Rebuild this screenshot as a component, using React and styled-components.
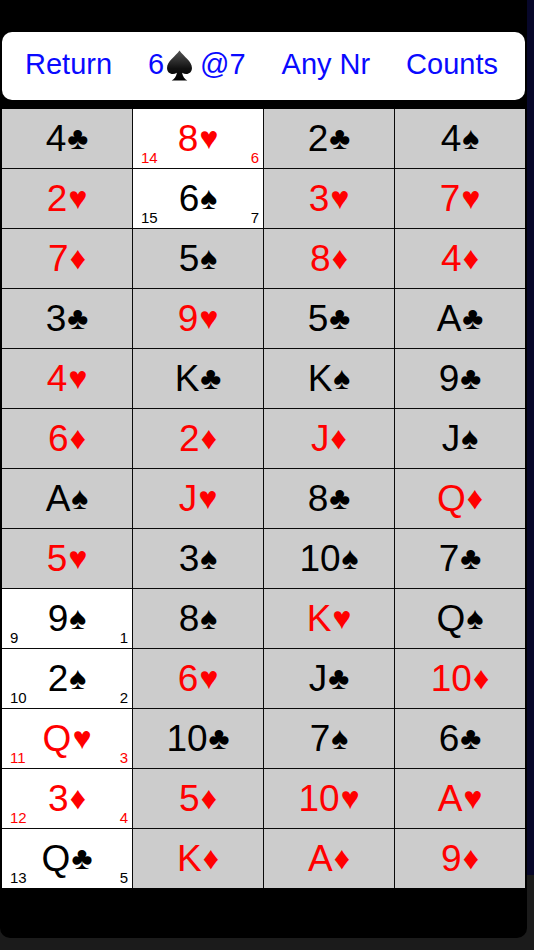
import React from "react";
import styled, { createGlobalStyle } from "styled-components";

const GlobalStyle = createGlobalStyle`
  html, body {
    margin: 0;
    padding: 0;
  }
  body {
    width: 534px;
    height: 950px;
    overflow: hidden;
    background: linear-gradient(to bottom, #07072a 0, #07072a 875px, #1b1b1b 875px);
    font-family: "Liberation Sans", Arial, sans-serif;
  }
`;

const Screen = styled.div`
  width: 527px;
  height: 938px;
  background: #000;
  border-radius: 0 0 10px 10px;
  padding-top: 32px;
  box-sizing: border-box;
`;

const TopBar = styled.div`
  margin: 0 2px;
  width: 523px;
  height: 68px;
  background: #fff;
  border-radius: 10px;
  display: flex;
  align-items: center;
  justify-content: space-between;
  padding: 0 27px 4px 23px;
  box-sizing: border-box;
`;

const BarButton = styled.span`
  color: #0a0aff;
  font-size: 29px;
  display: flex;
  align-items: center;
  white-space: nowrap;
`;

const Grid = styled.div`
  margin: 8px 0 0 1px;
  width: 525px;
  border: 1px solid #000;
  box-sizing: border-box;
  display: grid;
  grid-template-columns: repeat(4, 1fr);
  grid-auto-rows: 59px;
  gap: 1px;
  background: #0a0a0a;
`;

const Cell = styled.div`
  position: relative;
  background: ${({ $picked }) => ($picked ? "#fff" : "#cccccc")};
  color: ${({ $red }) => ($red ? "#ff0000" : "#000")};
  display: flex;
  align-items: center;
  justify-content: center;
  font-size: 37px;
  line-height: 1;
  padding-bottom: 1px;
`;

const Suit = styled.span`
  font-size: 32px;
  margin-left: 1px;
`;

const Corner = styled.span`
  position: absolute;
  bottom: 3px;
  font-size: 15px;
  line-height: 1;
  ${({ $side }) => ($side === "left" ? "left: 8px;" : "right: 4px;")}
`;

const SpadeIcon = () => (
  <svg width="27" height="34" viewBox="0 0 26 32" style={{ margin: "4px 7px 0 2px" }}>
    <defs>
      <linearGradient id="sp" x1="0" y1="0" x2="0" y2="1">
        <stop offset="0" stopColor="#555" />
        <stop offset="0.6" stopColor="#111" />
        <stop offset="1" stopColor="#000" />
      </linearGradient>
    </defs>
    <path
      d="M13 1 C9 7 1 11 1 18 C1 23 6 25.5 10.5 22.5 C10 26 8 28.5 5.5 30 L20.5 30 C18 28.5 16 26 15.5 22.5 C20 25.5 25 23 25 18 C25 11 17 7 13 1 Z"
      fill="url(#sp)"
    />
  </svg>
);

const RED = { "♥": true, "♦": true };

const rows = [
  [["4", "♣"], ["8", "♥", 14, 6], ["2", "♣"], ["4", "♠"]],
  [["2", "♥"], ["6", "♠", 15, 7], ["3", "♥"], ["7", "♥"]],
  [["7", "♦"], ["5", "♠"], ["8", "♦"], ["4", "♦"]],
  [["3", "♣"], ["9", "♥"], ["5", "♣"], ["A", "♣"]],
  [["4", "♥"], ["K", "♣"], ["K", "♠"], ["9", "♣"]],
  [["6", "♦"], ["2", "♦"], ["J", "♦"], ["J", "♠"]],
  [["A", "♠"], ["J", "♥"], ["8", "♣"], ["Q", "♦"]],
  [["5", "♥"], ["3", "♠"], ["10", "♠"], ["7", "♣"]],
  [["9", "♠", 9, 1], ["8", "♠"], ["K", "♥"], ["Q", "♠"]],
  [["2", "♠", 10, 2], ["6", "♥"], ["J", "♣"], ["10", "♦"]],
  [["Q", "♥", 11, 3], ["10", "♣"], ["7", "♠"], ["6", "♣"]],
  [["3", "♦", 12, 4], ["5", "♦"], ["10", "♥"], ["A", "♥"]],
  [["Q", "♣", 13, 5], ["K", "♦"], ["A", "♦"], ["9", "♦"]],
];

export default function App() {
  return (
    <>
      <GlobalStyle />
      <Screen>
        <TopBar>
          <BarButton>Return</BarButton>
          <BarButton>
            6<SpadeIcon />@7
          </BarButton>
          <BarButton>Any Nr</BarButton>
          <BarButton>Counts</BarButton>
        </TopBar>
        <Grid>
          {rows.flat().map(([rank, suit, left, right], i) => (
            <Cell key={i} $red={RED[suit]} $picked={left !== undefined}>
              {rank}
              <Suit>{suit}</Suit>
              {left !== undefined && <Corner $side="left">{left}</Corner>}
              {right !== undefined && <Corner $side="right">{right}</Corner>}
            </Cell>
          ))}
        </Grid>
      </Screen>
    </>
  );
}
